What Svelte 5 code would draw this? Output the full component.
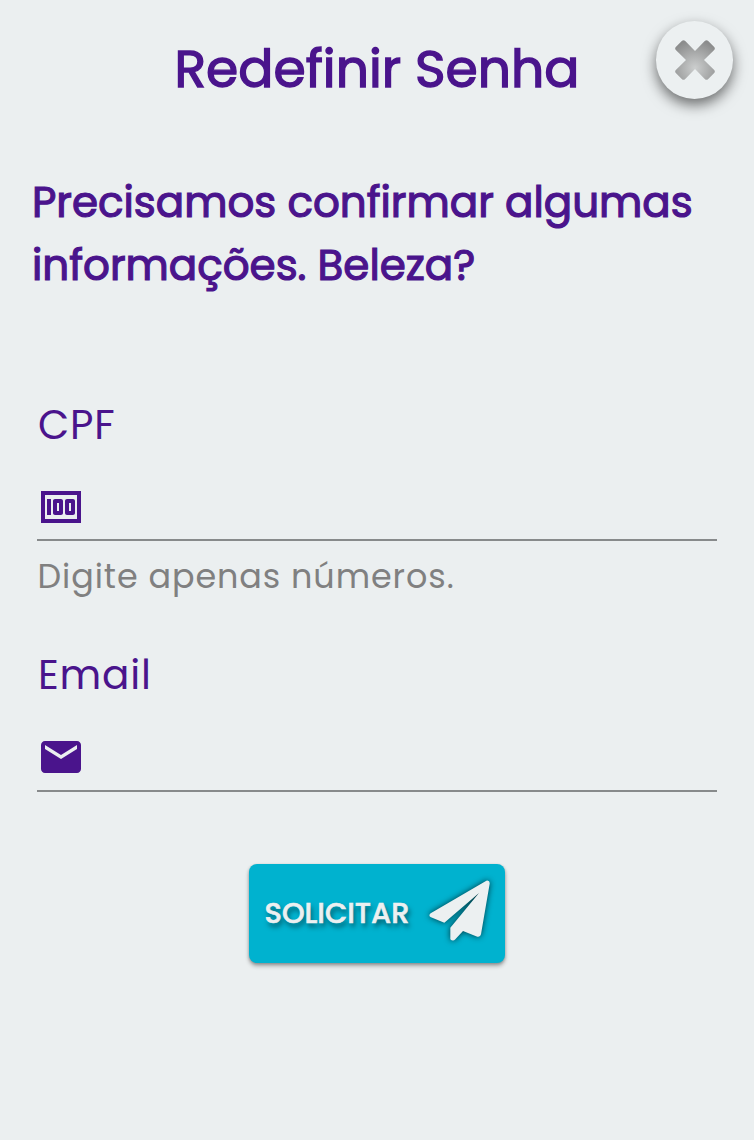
<script>
  let cpf = $state('');
  let email = $state('');
</script>

<main>
  <header>
    <h1>Redefinir Senha</h1>
    <button class="close" type="button" aria-label="Fechar">
      <svg viewBox="0 0 40 40" width="40" height="40">
        <defs>
          <radialGradient id="shade" gradientUnits="userSpaceOnUse" cx="20" cy="28" r="28">
            <stop offset="0" stop-color="#cccece" />
            <stop offset="1" stop-color="#8b8c8c" />
          </radialGradient>
        </defs>
        <path fill="url(#shade)" d="M7 .8Q8.500-.5 10 .8L20 11 30 .8Q31.500-.5 33 .8L39.200 7Q40.500 8.500 39.200 10L29 20 39.200 30Q40.500 31.500 39.200 33L33 39.200Q31.500 40.500 30 39.200L20 29 10 39.200Q8.500 40.500 7 39.200L.8 33Q-.5 31.500.8 30L11 20 .8 10Q-.5 8.500.8 7Z" />
      </svg>
    </button>
  </header>

  <p class="intro">Precisamos confirmar algumas informações. Beleza?</p>

  <form>
    <div class="field">
      <label for="cpf">CPF</label>
      <div class="line">
        <svg viewBox="0 0 24 24">
          <path d="M5 8h2v8H5zM12 8H9c-.55 0-1 .45-1 1v6c0 .55.45 1 1 1h3c.55 0 1-.45 1-1V9c0-.55-.45-1-1-1zm-1 6h-1v-4h1v4zM18 8h-3c-.55 0-1 .45-1 1v6c0 .55.45 1 1 1h3c.55 0 1-.45 1-1V9c0-.55-.45-1-1-1zm-1 6h-1v-4h1v4z" />
          <path d="M2 4v16h20V4H2zm2 14V6h16v12H4z" />
        </svg>
        <input id="cpf" bind:value={cpf} />
      </div>
      <div class="hint">Digite apenas números.</div>
    </div>
    <div class="field">
      <label for="email">Email</label>
      <div class="line">
        <svg viewBox="0 0 24 24">
          <path d="M20 4H4c-1.100 0-1.990.9-1.990 2L2 18c0 1.100.9 2 2 2h16c1.100 0 2-.9 2-2V6c0-1.100-.9-2-2-2zm0 4-8 5-8-5V6l8 5 8-5v2z" />
        </svg>
        <input id="email" bind:value={email} />
      </div>
    </div>
    <button class="submit" type="button">
      <span>SOLICITAR</span>
      <svg viewBox="566 73 183 183" width="61" height="61">
        <path d="M738 75Q749 73 748 84L722 236Q720 245 711 243L668 226 645 251Q638 258 630 251V216L716 112 612 201 572 185Q563 180 571 173Z" />
      </svg>
    </button>
  </form>
</main>

<style>
  :global(body) { background: #ebeff0; }
  main {
    box-sizing: border-box;
    width: 754px;
    height: 1140px;
    overflow: hidden;
    background: #ebeff0;
    color: #4a148c;
    font-family: Poppins, Inter, sans-serif;
  }
  header { position: relative; height: 138px; text-align: center; }
  h1 { margin: 0; font-size: 52px; line-height: 138px; font-weight: 400; -webkit-text-stroke: 1.4px #4a148c; }
  .close {
    position: absolute;
    left: 656px;
    top: 21px;
    display: grid;
    place-items: center;
    width: 77px;
    height: 77.5px;
    padding: 0;
    border: 0;
    border-radius: 50%;
    background: #ecf0f1;
    box-shadow: 0 6px 14px rgba(0, 0, 0, .55);
  }
  .intro {
    width: 700px;
    height: 126px;
    margin: 33px 0 0 32px;
    font-size: 42px;
    font-weight: 400;
    line-height: 64px;
    -webkit-text-stroke: 1.2px #4a148c;
  }
  .intro { line-height: 63px; }
  form { display: flex; flex-direction: column; width: 680px; margin: 96px 0 0 37px; }
  .field { height: 250.5px; }
  .field + .field label { line-height: 61px; }
  .field + .field svg { position: relative; top: -1px; }
  label {
    display: block;
    height: 64px;
    padding-left: 1px;
    font-size: 40.5px;
    letter-spacing: .8px;
    line-height: 64px;
  }
  .line { display: flex; align-items: center; height: 56px; padding: 22px 0 4px; border-bottom: 2px solid #878a8b; }
  .line svg { flex: none; width: 48px; height: 48px; margin-right: 10px; fill: #4a148c; }
  input { flex: 1; min-width: 0; height: 48px; padding: 0; border: 0; outline: 0; background: transparent; font: inherit; font-size: 34px; color: inherit; }
  .hint { padding-left: .5px; color: #808080; font-size: 33.4px; letter-spacing: .93px; line-height: 72px; }
  .submit {
    display: flex;
    align-items: center;
    justify-content: space-between;
    box-sizing: border-box;
    width: 256px;
    height: 99px;
    margin: -30px 0 0 212px;
    padding: 0 15px 7px 15.6px;
    border: 0;
    border-radius: 8px;
    background: #00b2cf;
    box-shadow: 0 3px 4px rgba(0, 0, 0, .3), 0 1px 3px rgba(0, 0, 0, .2);
    color: #ecf0f1;
    font: 500 28.8px Poppins, Inter, sans-serif;
    text-shadow: 2px 4px 5px rgba(0, 0, 0, .5);
    -webkit-text-stroke: .6px #ecf0f1;
  }
  .submit svg { overflow: visible; fill: #ecf0f1; filter: drop-shadow(0 0 3px rgba(0, 0, 0, .7)); }
  .submit span { margin-top: 7px; }
</style>
